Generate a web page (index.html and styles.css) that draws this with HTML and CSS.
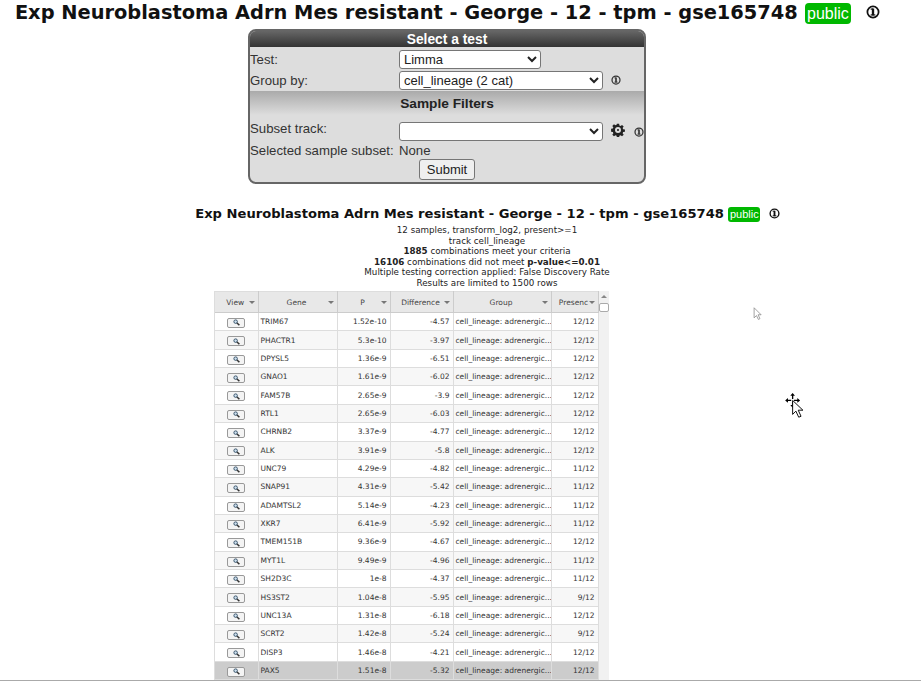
FILE: index.html
```html
<!DOCTYPE html>
<html lang="en">
<head>
  <meta charset="UTF-8">
  <title>Exp Neuroblastoma Adrn Mes resistant</title>
  <link rel="stylesheet" href="styles.css">
</head>
<body>
<svg class="defs" width="0" height="0">
  <symbol id="info" viewBox="0 0 12 12">
    <circle cx="6" cy="6" r="4.8" fill="none" stroke="currentColor" stroke-width="1.5"/>
    <rect x="5" y="3" width="2" height="6" fill="currentColor"/>
    <rect x="4" y="3" width="2" height="1" fill="currentColor"/>
    <rect x="4" y="8" width="4" height="1" fill="currentColor"/>
  </symbol>
  <symbol id="lens" viewBox="0 0 8 8">
    <circle cx="3" cy="3" r="2" fill="#cfe0ee" stroke="#37536b" stroke-width="1.1"/>
    <path d="M4.5 4.5 7.3 7" stroke="#333" stroke-width="1.6"/>
  </symbol>
</svg>

<h1 class="page-title">Exp Neuroblastoma Adrn Mes resistant - George - 12 - tpm - gse165748 <span class="badge">public</span> <svg class="info info-big"><use href="#info"/></svg></h1>

<form class="test-box">
  <div class="box-head">Select a test</div>
  <div class="form-row row-test">
    <label>Test:</label>
    <select class="sel-short"><option>Limma</option></select>
  </div>
  <div class="form-row row-group">
    <label>Group by:</label>
    <select class="sel-long"><option>cell_lineage (2 cat)</option></select>
    <svg class="info info-small"><use href="#info"/></svg>
  </div>
  <div class="box-band">Sample Filters</div>
  <div class="form-row row-subset">
    <label>Subset track:</label>
    <select class="sel-long"><option></option></select>
    <svg class="gear" viewBox="0 0 16 16">
      <path d="M6.700 .8h2.600l.3 2 1.300.6 1.700-1.200 1.900 1.900-1.200 1.700.6 1.300 2 .3v2.600l-2 .3-.6 1.300 1.200 1.700-1.900 1.900-1.700-1.200-1.300.6-.3 2H6.700l-.3-2-1.300-.6-1.700 1.200-1.900-1.900 1.200-1.700-.6-1.300-2-.3V6.700l2-.3.6-1.300-1.200-1.700 1.900-1.900 1.700 1.200 1.300-.6z" fill="#222"/>
      <circle cx="8" cy="8" r="3.400" fill="#ddd"/>
      <circle cx="8" cy="8" r="1.200" fill="#222"/>
    </svg>
    <svg class="info info-small"><use href="#info"/></svg>
  </div>
  <div class="form-row row-selected">
    <label>Selected sample subset:</label>
    <span>None</span>
  </div>
  <div class="box-submit"><button type="button">Submit</button></div>
</form>

<h2 class="sub-title">Exp Neuroblastoma Adrn Mes resistant - George - 12 - tpm - gse165748 <span class="badge">public</span> <svg class="info info-mid"><use href="#info"/></svg></h2>

<div class="summary">
  <div>12 samples, transform_log2, present&gt;=1</div>
  <div>track cell_lineage</div>
  <div><b>1885</b> combinations meet your criteria</div>
  <div><b>16106</b> combinations did not meet <b>p-value&lt;=0.01</b></div>
  <div>Multiple testing correction applied: False Discovery Rate</div>
  <div>Results are limited to 1500 rows</div>
</div>

<div class="grid-wrap">
  <table class="results">
    <colgroup>
      <col class="c-view"><col class="c-gene"><col class="c-p"><col class="c-diff"><col class="c-group"><col class="c-pres">
    </colgroup>
    <thead>
      <tr>
        <th><span>View</span><i></i></th>
        <th><span>Gene</span><i></i></th>
        <th><span>P</span><i></i></th>
        <th><span>Difference</span><i></i></th>
        <th><span>Group</span><i></i></th>
        <th><span>Presenc</span><i></i></th>
      </tr>
    </thead>
    <tbody>
      <tr><td><button type="button" class="view"><svg><use href="#lens"/></svg></button></td><td>TRIM67</td><td class="num">1.52e-10</td><td class="num">-4.57</td><td>cell_lineage: adrenergic...</td><td class="num">12/12</td></tr>
      <tr><td><button type="button" class="view"><svg><use href="#lens"/></svg></button></td><td>PHACTR1</td><td class="num">5.3e-10</td><td class="num">-3.97</td><td>cell_lineage: adrenergic...</td><td class="num">12/12</td></tr>
      <tr><td><button type="button" class="view"><svg><use href="#lens"/></svg></button></td><td>DPYSL5</td><td class="num">1.36e-9</td><td class="num">-6.51</td><td>cell_lineage: adrenergic...</td><td class="num">12/12</td></tr>
      <tr><td><button type="button" class="view"><svg><use href="#lens"/></svg></button></td><td>GNAO1</td><td class="num">1.61e-9</td><td class="num">-6.02</td><td>cell_lineage: adrenergic...</td><td class="num">12/12</td></tr>
      <tr><td><button type="button" class="view"><svg><use href="#lens"/></svg></button></td><td>FAM57B</td><td class="num">2.65e-9</td><td class="num">-3.9</td><td>cell_lineage: adrenergic...</td><td class="num">12/12</td></tr>
      <tr><td><button type="button" class="view"><svg><use href="#lens"/></svg></button></td><td>RTL1</td><td class="num">2.65e-9</td><td class="num">-6.03</td><td>cell_lineage: adrenergic...</td><td class="num">12/12</td></tr>
      <tr><td><button type="button" class="view"><svg><use href="#lens"/></svg></button></td><td>CHRNB2</td><td class="num">3.37e-9</td><td class="num">-4.77</td><td>cell_lineage: adrenergic...</td><td class="num">12/12</td></tr>
      <tr><td><button type="button" class="view"><svg><use href="#lens"/></svg></button></td><td>ALK</td><td class="num">3.91e-9</td><td class="num">-5.8</td><td>cell_lineage: adrenergic...</td><td class="num">12/12</td></tr>
      <tr><td><button type="button" class="view"><svg><use href="#lens"/></svg></button></td><td>UNC79</td><td class="num">4.29e-9</td><td class="num">-4.82</td><td>cell_lineage: adrenergic...</td><td class="num">11/12</td></tr>
      <tr><td><button type="button" class="view"><svg><use href="#lens"/></svg></button></td><td>SNAP91</td><td class="num">4.31e-9</td><td class="num">-5.42</td><td>cell_lineage: adrenergic...</td><td class="num">11/12</td></tr>
      <tr><td><button type="button" class="view"><svg><use href="#lens"/></svg></button></td><td>ADAMTSL2</td><td class="num">5.14e-9</td><td class="num">-4.23</td><td>cell_lineage: adrenergic...</td><td class="num">11/12</td></tr>
      <tr><td><button type="button" class="view"><svg><use href="#lens"/></svg></button></td><td>XKR7</td><td class="num">6.41e-9</td><td class="num">-5.92</td><td>cell_lineage: adrenergic...</td><td class="num">11/12</td></tr>
      <tr><td><button type="button" class="view"><svg><use href="#lens"/></svg></button></td><td>TMEM151B</td><td class="num">9.36e-9</td><td class="num">-4.67</td><td>cell_lineage: adrenergic...</td><td class="num">12/12</td></tr>
      <tr><td><button type="button" class="view"><svg><use href="#lens"/></svg></button></td><td>MYT1L</td><td class="num">9.49e-9</td><td class="num">-4.96</td><td>cell_lineage: adrenergic...</td><td class="num">11/12</td></tr>
      <tr><td><button type="button" class="view"><svg><use href="#lens"/></svg></button></td><td>SH2D3C</td><td class="num">1e-8</td><td class="num">-4.37</td><td>cell_lineage: adrenergic...</td><td class="num">11/12</td></tr>
      <tr><td><button type="button" class="view"><svg><use href="#lens"/></svg></button></td><td>HS3ST2</td><td class="num">1.04e-8</td><td class="num">-5.95</td><td>cell_lineage: adrenergic...</td><td class="num">9/12</td></tr>
      <tr><td><button type="button" class="view"><svg><use href="#lens"/></svg></button></td><td>UNC13A</td><td class="num">1.31e-8</td><td class="num">-6.18</td><td>cell_lineage: adrenergic...</td><td class="num">12/12</td></tr>
      <tr><td><button type="button" class="view"><svg><use href="#lens"/></svg></button></td><td>SCRT2</td><td class="num">1.42e-8</td><td class="num">-5.24</td><td>cell_lineage: adrenergic...</td><td class="num">9/12</td></tr>
      <tr><td><button type="button" class="view"><svg><use href="#lens"/></svg></button></td><td>DISP3</td><td class="num">1.46e-8</td><td class="num">-4.21</td><td>cell_lineage: adrenergic...</td><td class="num">12/12</td></tr>
      <tr class="selected"><td><button type="button" class="view"><svg><use href="#lens"/></svg></button></td><td>PAX5</td><td class="num">1.51e-8</td><td class="num">-5.32</td><td>cell_lineage: adrenergic...</td><td class="num">12/12</td></tr>
    </tbody>
  </table>
  <div class="scrollbar"><em></em><b></b></div>
</div>

<!-- stray pointers captured in the screenshot -->
<svg class="cursor cursor-ghost" viewBox="0 0 12 18">
  <path d="M1 1v13l3-3 2.500 5 2-1-2.400-5H10z" fill="#fff" stroke="#888"/>
</svg>
<svg class="cursor cursor-move" viewBox="0 0 22 30">
  <path d="M9 1 6.500 4h1.800v3.500h1.400V4h1.800zM1 9l3-2.500v1.800h3.500v1.400H4v1.800zM17 9l-3-2.500v1.800h-3.500v1.400H14v1.800zM9 17l-2.500-3h1.800v-3.500h1.400V14h1.800z" fill="#000"/>
  <path d="M9 9v15l3.500-3.500 3 6.500 2.500-1-3-6.500H20z" fill="#fff" stroke="#000"/>
</svg>
</body>
</html>
```

FILE: styles.css
```css
html, body {
  height: 681px;
  overflow: hidden;
}
body {
  margin: 0;
  background: white;
  color: #222;
  font-family: "Liberation Sans", Arial, sans-serif;
  position: relative;
  border-bottom: 1px solid #aaa;
  box-sizing: border-box;
}
.defs {
  display: block;
  height: 0;
}
.page-title {
  width: 895px;
  height: 29px;
  margin: 0;
  font: bold 19.400px/26px "DejaVu Sans", Verdana, sans-serif;
  color: #111;
  text-align: center;
  white-space: nowrap;
}
.badge {
  display: inline-block;
  background: #00b800;
  color: white;
  font: 16px/21px "Liberation Sans", Arial, sans-serif;
  padding: 0 2.500px;
  border-radius: 4px;
}
.info {
  color: #111;
  vertical-align: middle;
}
.info-big { width: 14px; height: 14px; margin-left: 8px; margin-top: -4px; }
.info-mid { width: 11px; height: 11px; margin-left: 4px; margin-top: -2px; }
.info-small { width: 10px; height: 10px; color: #333; }

.test-box {
  width: 394px;
  height: 151px;
  margin-left: 248px;
  border: 2px solid #666;
  border-radius: 8px;
  background: #ddd;
  font-size: 13.200px;
  overflow: hidden;
}
.box-head {
  height: 16px;
  background: linear-gradient(#666, #333);
  color: white;
  font-weight: bold;
  font-size: 13.800px;
  line-height: 18px;
  text-align: center;
}
.form-row {
  display: grid;
  grid-template-columns: 149px auto auto auto;
  justify-content: start;
  align-items: center;
  height: 20px;
  color: #333;
  white-space: nowrap;
}
.row-test { margin-top: 2px; }
.row-group { margin-top: 1px; }
.row-subset { margin-top: 6px; }
.row-selected { margin-top: -1px; }
.row-group .info-small { margin-left: 8px; }
.row-subset label { margin-top: -6px; }
select {
  font: 13px "Liberation Sans", Arial, sans-serif;
  height: 19px;
  padding: 0;
  background: white;
  color: #222;
  border: 1px solid #767676;
  border-radius: 3px;
}
.sel-short { width: 142px; }
.sel-long { width: 204px; }
.gear { width: 14px; height: 14px; margin-left: 8px; margin-top: -2px; }
.row-subset .info-small { margin-left: 9px; margin-top: 1px; }
.box-band {
  height: 24px;
  margin-top: 1px;
  background: linear-gradient(#aaa, #ddd);
  font-weight: bold;
  font-size: 13.700px;
  line-height: 26px;
  text-align: center;
  color: #222;
}
.box-submit {
  text-align: center;
  margin-top: -1px;
}
.box-submit button {
  width: 56px;
  height: 21px;
  padding: 0;
  font: 13px "Liberation Sans", Arial, sans-serif;
  color: #222;
  background: #efefef;
  border: 1px solid #767676;
  border-radius: 3px;
}

.sub-title {
  margin: 20px 0 0 54px;
  height: 19px;
  font: bold 13.100px/19px "DejaVu Sans", Verdana, sans-serif;
  color: #111;
  text-align: center;
  white-space: nowrap;
}
.sub-title .badge {
  font-size: 11px;
  line-height: 15px;
  padding: 0 1.500px;
  border-radius: 3px;
}
.summary {
  width: 430px;
  margin: 2px 0 0 272px;
  font: 8.730px/10.500px "DejaVu Sans", Verdana, sans-serif;
  text-align: center;
  color: #222;
}

.grid-wrap {
  display: flex;
  width: 395px;
  height: 400px;
  margin: 3px 0 0 214px;
  overflow: hidden;
  border-left: 1px solid #ddd;
  box-sizing: border-box;
}
.results {
  border-collapse: collapse;
  table-layout: fixed;
  width: 383px;
  flex: none;
  align-self: flex-start;
  font: 7.500px "DejaVu Sans", Verdana, sans-serif;
  color: #333;
}
.c-view { width: 43px; }
.c-gene { width: 79px; }
.c-p { width: 53px; }
.c-diff { width: 63px; }
.c-group { width: 98px; }
.c-pres { width: 47px; }
.results th {
  height: 20px;
  padding: 0;
  background: #e8e8e8;
  border-right: 1px solid #ccc;
  border-top: 1px solid #ddd;
  border-bottom: 1px solid #ccc;
  font-weight: normal;
  position: relative;
  color: #444;
}
.results th span {
  display: inline-block;
  margin-right: 2px;
}
.results th i {
  position: absolute;
  right: 3px;
  top: 9px;
  border: 3px solid transparent;
  border-top: 3px solid #777;
  border-bottom: 0;
}
.results td {
  height: 17.370px;
  padding: 0 2px;
  border-right: 1px solid #ddd;
  border-bottom: 1px solid #ddd;
  white-space: nowrap;
  overflow: hidden;
}
.results tbody tr:nth-child(even) { background: #f7f7f7; }
.results tbody tr.selected { background: #ccc; }
.results td.num { text-align: right; padding-right: 3px; }
.results td:first-child { text-align: center; padding: 0; }
.view {
  display: inline-flex;
  align-items: center;
  justify-content: center;
  width: 18px;
  height: 10px;
  margin-top: 3px;
  padding: 0;
  background: #f4f4f4;
  border: 1px solid #999;
  border-radius: 2px;
}
.view svg { width: 7px; height: 7px; }
.scrollbar {
  flex: 1;
  background: #f1f1f1;
  position: relative;
}
.scrollbar em {
  position: absolute;
  left: 2px;
  top: 4px;
  border: 3px solid transparent;
  border-bottom: 3px solid #888;
  border-top: 0;
}
.scrollbar b {
  position: absolute;
  left: 0;
  top: 12px;
  width: 8px;
  height: 7px;
  background: white;
  border: 1px solid #aaa;
  border-radius: 2px;
}

.cursor {
  position: absolute;
}
.cursor-ghost {
  left: 753px;
  top: 307px;
  width: 10px;
  height: 14px;
}
.cursor-move {
  left: 784px;
  top: 392px;
  width: 21px;
  height: 28px;
}
```
